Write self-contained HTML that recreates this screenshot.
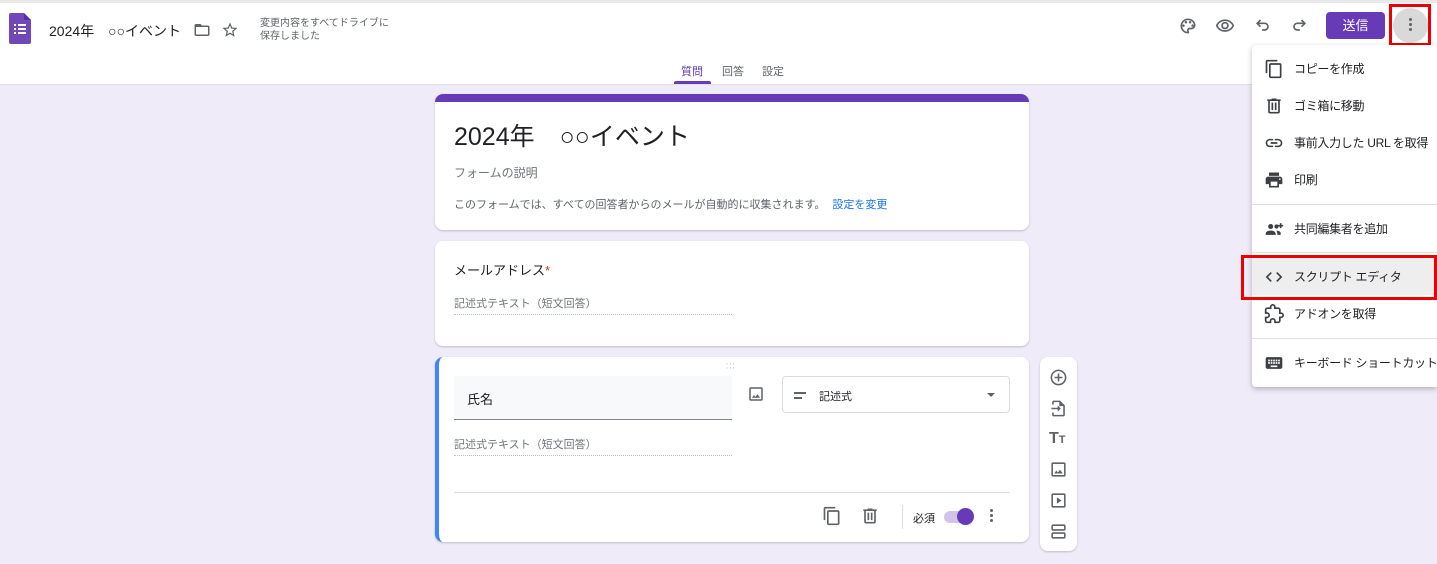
<!DOCTYPE html>
<html><head><meta charset="utf-8"><style>
*{box-sizing:border-box;margin:0;padding:0}
body{width:1437px;height:564px;overflow:hidden;background:#f0ebf8;font-family:"Liberation Sans","Noto Sans CJK JP",sans-serif;color:#202124;position:relative}
.a{position:absolute}
.hdr{left:0;top:0;width:1437px;height:85px;background:#fff;border-top:3px solid #e8e8e8;border-bottom:1px solid #e0e0e0}
.card{position:absolute;background:#fff;border-radius:8px;box-shadow:0 1px 2px rgba(0,0,0,.2)}
.ic{position:absolute;fill:#5f6368}
.mi{position:absolute;left:0;width:185px;height:37px;font-size:12px;color:#202124;white-space:nowrap}
.mi span{position:absolute;left:42px;top:10px;letter-spacing:-.3px}
.mi svg{position:absolute;left:12px;top:9px;fill:#3c4043}
</style></head><body>
<div class="a hdr"></div>
<svg class="a" style="left:9px;top:13px" width="22" height="31" viewBox="0 0 22 31"><path d="M2 0h13l7 7v22a2 2 0 0 1-2 2H2a2 2 0 0 1-2-2V2a2 2 0 0 1 2-2z" fill="#7248b9"/><path d="M15 0l7 7h-7z" fill="#5a2f9e"/><g fill="#fff"><rect x="5" y="11" width="2" height="2"/><rect x="9" y="11" width="8" height="2"/><rect x="5" y="15" width="2" height="2"/><rect x="9" y="15" width="8" height="2"/><rect x="5" y="19" width="2" height="2"/><rect x="9" y="19" width="8" height="2"/></g></svg>
<div class="a" style="left:49px;top:21px;font-size:14px;white-space:nowrap">2024年　○○イベント</div>
<svg class="ic" style="left:193px;top:21px" width="18" height="18" viewBox="0 0 24 24"><path d="M10 4H4c-1.1 0-2 .9-2 2v12c0 1.1.9 2 2 2h16c1.1 0 2-.9 2-2V8c0-1.1-.9-2-2-2h-8l-2-2zm10 14H4V8h16v10z"/></svg>
<svg class="ic" style="left:221px;top:21px" width="18" height="18" viewBox="0 0 24 24"><path d="M22 9.24l-7.19-.62L12 2 9.19 8.63 2 9.24l5.46 4.73L5.82 21 12 17.27 18.18 21l-1.63-7.03L22 9.24zM12 15.4l-3.76 2.27 1-4.28-3.32-2.88 4.38-.38L12 6.1l1.71 4.04 4.38.38-3.32 2.88 1 4.28L12 15.4z"/></svg>
<div class="a" style="left:260px;top:17px;font-size:10px;line-height:13px;color:#5f6368">変更内容をすべてドライブに<br>保存しました</div>
<svg class="ic" style="left:1178px;top:16px" width="20" height="20" viewBox="0 0 24 24"><path d="M12 3a9 9 0 0 0 0 18c.83 0 1.5-.67 1.5-1.5 0-.39-.15-.74-.39-1.01-.23-.26-.38-.61-.38-.99 0-.83.67-1.5 1.5-1.5H16c2.76 0 5-2.24 5-5 0-4.42-4.03-8-9-8zm0 16a7 7 0 0 1 0-14c3.86 0 7 2.69 7 6 0 1.65-1.35 3-3 3h-1.77c-1.93 0-3.5 1.57-3.5 3.5 0 .61.16 1.2.46 1.71A.5.5 0 0 1 12 19z"/><circle cx="6.5" cy="11.5" r="1.5"/><circle cx="9.5" cy="7.5" r="1.5"/><circle cx="14.5" cy="7.5" r="1.5"/><circle cx="17.5" cy="11.5" r="1.5"/></svg>
<svg class="ic" style="left:1215px;top:16px" width="20" height="20" viewBox="0 0 24 24"><path d="M12 6c3.79 0 7.17 2.13 8.82 5.5C19.17 14.87 15.79 17 12 17s-7.17-2.13-8.82-5.5C4.83 8.13 8.21 6 12 6m0-2C7 4 2.73 7.11 1 11.5 2.73 15.89 7 19 12 19s9.27-3.11 11-7.5C21.27 7.11 17 4 12 4zm0 5a2.5 2.5 0 1 1 0 5 2.5 2.5 0 0 1 0-5m0-2c-2.48 0-4.5 2.02-4.5 4.5S9.52 16 12 16s4.5-2.02 4.5-4.5S14.48 7 12 7z"/></svg>
<svg class="a" style="left:1253px;top:15px;fill:none" width="20" height="20" viewBox="0 0 24 24" stroke="#5f6368" stroke-width="2"><path d="M9 6 5 10l4 4"/><path d="M5 10h9a4 4 0 0 1 0 8h-3"/></svg>
<svg class="a" style="left:1289px;top:15px;fill:none" width="20" height="20" viewBox="0 0 24 24" stroke="#5f6368" stroke-width="2"><path d="M15 6l4 4-4 4"/><path d="M19 10h-9a4 4 0 0 0 0 8h3"/></svg>
<div class="a" style="left:1326px;top:12px;width:59px;height:27px;background:#673ab7;border-radius:4px;color:#fff;font-size:13px;text-align:center;line-height:27px">送信</div>
<div class="a" style="left:1393px;top:8px;width:35px;height:35px;border-radius:50%;background:#d9d9d9"></div>
<div class="a" style="left:1409px;top:18px;width:3px;height:3px;border-radius:50%;background:#5f6368;box-shadow:0 5px 0 #5f6368,0 10px 0 #5f6368"></div>
<div class="a" style="left:1389px;top:4px;width:42px;height:42px;border:3px solid #e00"></div>
<div class="a" style="left:681px;top:63px;font-size:11px;color:#673ab7">質問</div>
<div class="a" style="left:674px;top:81px;width:37px;height:3px;background:#673ab7;border-radius:2px 2px 0 0"></div>
<div class="a" style="left:722px;top:63px;font-size:11px;color:#5f6368">回答</div>
<div class="a" style="left:762px;top:63px;font-size:11px;color:#5f6368">設定</div>
<div class="card" style="left:435px;top:94px;width:594px;height:136px;overflow:hidden"><div style="height:8px;background:#673ab7"></div></div>
<div class="a" style="left:454px;top:117px;font-size:25px">2024年　○○イベント</div>
<div class="a" style="left:454px;top:164px;font-size:12px;color:#70757a">フォームの説明</div>
<div class="a" style="left:454px;top:196px;font-size:11px;color:#5f6368">このフォームでは、すべての回答者からのメールが自動的に収集されます。 <span style="color:#1a73e8;margin-left:4px">設定を変更</span></div>
<div class="card" style="left:435px;top:241px;width:594px;height:105px"></div>
<div class="a" style="left:454px;top:260px;font-size:13px">メールアドレス<span style="color:#d93025">*</span></div>
<div class="a" style="left:454px;top:295px;font-size:11px;color:#70757a">記述式テキスト（短文回答）</div>
<div class="a" style="left:454px;top:314px;width:278px;border-top:1px dotted #bdbdbd"></div>
<div class="card" style="left:435px;top:357px;width:594px;height:185px;border-left:4px solid #4285f4"></div>
<div class="a" style="left:726px;top:362px;font-size:8px;color:#999;letter-spacing:1px;line-height:4px">∙∙∙<br>∙∙∙</div>
<div class="a" style="left:454px;top:376px;width:278px;height:44px;background:#f8f9fa;border-bottom:1px solid #80868b"></div>
<div class="a" style="left:467px;top:389px;font-size:13px">氏名</div>
<svg class="ic" style="left:747px;top:385px" width="18" height="18" viewBox="0 0 24 24"><path d="M19 3H5a2 2 0 0 0-2 2v14a2 2 0 0 0 2 2h14a2 2 0 0 0 2-2V5a2 2 0 0 0-2-2zm0 16H5V5h14v14zm-5.04-6.71-2.75 3.54-1.96-2.36L6.5 17h11l-3.54-4.71z"/></svg>
<div class="a" style="left:782px;top:376px;width:228px;height:37px;border:1px solid #dadce0;border-radius:4px"></div>
<div class="a" style="left:794px;top:392px;width:12px;height:2px;background:#5f6368"></div>
<div class="a" style="left:794px;top:397px;width:8px;height:2px;background:#5f6368"></div>
<div class="a" style="left:819px;top:388px;font-size:11px">記述式</div>
<div class="a" style="left:987px;top:393px;border:4px solid transparent;border-top:4px solid #5f6368;border-bottom:0"></div>
<div class="a" style="left:454px;top:436px;font-size:11px;color:#70757a">記述式テキスト（短文回答）</div>
<div class="a" style="left:454px;top:455px;width:278px;border-top:1px dotted #bdbdbd"></div>
<div class="a" style="left:454px;top:492px;width:556px;border-top:1px solid #e0e0e0"></div>
<svg class="ic" style="left:822px;top:506px" width="20" height="20" viewBox="0 0 24 24"><path d="M16 1H4c-1.1 0-2 .9-2 2v14h2V3h12V1zm3 4H8c-1.1 0-2 .9-2 2v14c0 1.1.9 2 2 2h11c1.1 0 2-.9 2-2V7c0-1.1-.9-2-2-2zm0 16H8V7h11v14z"/></svg>
<svg class="ic" style="left:860px;top:506px" width="20" height="20" viewBox="0 0 24 24"><path d="M15 4V3H9v1H4v2h1v13c0 1.1.9 2 2 2h10c1.1 0 2-.9 2-2V6h1V4h-5zm2 15H7V6h10v13zM9 8h2v9H9zm4 0h2v9h-2z"/></svg>
<div class="a" style="left:902px;top:505px;width:1px;height:24px;background:#dadce0"></div>
<div class="a" style="left:913px;top:510px;font-size:11px">必須</div>
<div class="a" style="left:944px;top:511px;width:28px;height:12px;border-radius:6px;background:#d1c4e9"></div>
<div class="a" style="left:957px;top:508px;width:17px;height:17px;border-radius:50%;background:#673ab7"></div>
<div class="a" style="left:990px;top:509px;width:3px;height:3px;border-radius:50%;background:#5f6368;box-shadow:0 5px 0 #5f6368,0 10px 0 #5f6368"></div>
<div class="card" style="left:1040px;top:357px;width:37px;height:194px"></div>
<svg class="ic" style="left:1049px;top:368px" width="19" height="19" viewBox="0 0 24 24"><path d="M13 7h-2v4H7v2h4v4h2v-4h4v-2h-4V7zm-1-5C6.48 2 2 6.48 2 12s4.48 10 10 10 10-4.48 10-10S17.52 2 12 2zm0 18c-4.41 0-8-3.59-8-8s3.59-8 8-8 8 3.59 8 8-3.59 8-8 8z"/></svg>
<svg class="ic" style="left:1049px;top:399px" width="19" height="19" viewBox="0 0 24 24"><path d="M14 2H6c-1.1 0-2 .9-2 2v3h2V4h7v5h5v11H6v-3H4v3c0 1.1.9 2 2 2h12c1.1 0 2-.9 2-2V8l-6-6zM11 16l4-4-4-4v3H3v2h8v3z"/></svg>
<div class="a" style="left:1049px;top:430px;font-size:16px;font-weight:bold;color:#5f6368">T<span style="font-size:11px">T</span></div>
<svg class="ic" style="left:1049px;top:460px" width="19" height="19" viewBox="0 0 24 24"><path d="M19 3H5a2 2 0 0 0-2 2v14a2 2 0 0 0 2 2h14a2 2 0 0 0 2-2V5a2 2 0 0 0-2-2zm0 16H5V5h14v14zm-5.04-6.71-2.75 3.54-1.96-2.36L6.5 17h11l-3.54-4.71z"/></svg>
<svg class="ic" style="left:1049px;top:491px" width="19" height="19" viewBox="0 0 24 24"><path d="M10 8v8l6-4-6-4zm9-5H5a2 2 0 0 0-2 2v14a2 2 0 0 0 2 2h14a2 2 0 0 0 2-2V5a2 2 0 0 0-2-2zm0 16H5V5h14v14z"/></svg>
<svg class="ic" style="left:1049px;top:522px" width="19" height="19" viewBox="0 0 24 24"><path d="M19 13H5c-1.1 0-2 .9-2 2v4c0 1.1.9 2 2 2h14c1.1 0 2-.9 2-2v-4c0-1.1-.9-2-2-2zm0 6H5v-4h14v4zm0-16H5c-1.1 0-2 .9-2 2v4c0 1.1.9 2 2 2h14c1.1 0 2-.9 2-2V5c0-1.1-.9-2-2-2zm0 6H5V5h14v4z"/></svg>
<div class="a" style="left:1252px;top:45px;width:185px;height:342px;background:#fff;box-shadow:0 2px 6px rgba(0,0,0,.25);border-radius:4px 0 0 4px">
 <div class="mi" style="top:5px"><svg width="20" height="20" viewBox="0 0 24 24"><path d="M16 1H4c-1.1 0-2 .9-2 2v14h2V3h12V1zm3 4H8c-1.1 0-2 .9-2 2v14c0 1.1.9 2 2 2h11c1.1 0 2-.9 2-2V7c0-1.1-.9-2-2-2zm0 16H8V7h11v14z"/></svg><span>コピーを作成</span></div>
 <div class="mi" style="top:42px"><svg width="20" height="20" viewBox="0 0 24 24"><path d="M15 4V3H9v1H4v2h1v13c0 1.1.9 2 2 2h10c1.1 0 2-.9 2-2V6h1V4h-5zm2 15H7V6h10v13zM9 8h2v9H9zm4 0h2v9h-2z"/></svg><span>ゴミ箱に移動</span></div>
 <div class="mi" style="top:79px"><svg width="20" height="20" viewBox="0 0 24 24"><path d="M3.9 12c0-1.71 1.39-3.1 3.1-3.1h4V7H7c-2.76 0-5 2.24-5 5s2.24 5 5 5h4v-1.9H7c-1.71 0-3.1-1.39-3.1-3.1zM8 13h8v-2H8v2zm9-6h-4v1.9h4c1.71 0 3.1 1.39 3.1 3.1s-1.39 3.1-3.1 3.1h-4V17h4c2.76 0 5-2.24 5-5s-2.24-5-5-5z"/></svg><span>事前入力した URL を取得</span></div>
 <div class="mi" style="top:116px"><svg width="20" height="20" viewBox="0 0 24 24"><path d="M19 8H5c-1.66 0-3 1.34-3 3v6h4v4h12v-4h4v-6c0-1.66-1.34-3-3-3zm-3 11H8v-5h8v5zm3-7c-.55 0-1-.45-1-1s.45-1 1-1 1 .45 1 1-.45 1-1 1zm-1-9H6v4h12V3z"/></svg><span>印刷</span></div>
 <div style="position:absolute;left:0;top:159px;width:185px;border-top:1px solid #e0e0e0"></div>
 <div class="mi" style="top:165px"><svg width="20" height="20" viewBox="0 0 24 24"><circle cx="8" cy="9" r="3"/><circle cx="15" cy="9" r="2.5"/><path d="M2 18c0-3 3-4 6-4s6 1 6 4v1H2zM15 14c2 0 5 1 5 3v2h-4v-1c0-1.5-.5-2.5-1-4zM19 5h2v2h2v2h-2v2h-2V9h-2V7h2z"/></svg><span>共同編集者を追加</span></div>
 <div style="position:absolute;left:0;top:207px;width:185px;border-top:1px solid #e0e0e0"></div>
 <div class="mi" style="top:213px;background:#eee"><svg width="20" height="20" viewBox="0 0 24 24"><path d="M9.4 16.6 4.8 12l4.6-4.6L8 6l-6 6 6 6 1.4-1.4zm5.2 0 4.6-4.6-4.6-4.6L16 6l6 6-6 6-1.4-1.4z"/></svg><span>スクリプト エディタ</span></div>
 <div class="mi" style="top:250px"><svg width="20" height="20" viewBox="0 0 24 24" style="fill:none"><path d="M20.5 11H19V7c0-1.1-.9-2-2-2h-4V3.5a2.5 2.5 0 0 0-5 0V5H4c-1.1 0-2 .9-2 2v3.8h1.5c1.5 0 2.7 1.2 2.7 2.7S5 16.2 3.5 16.2H2V20c0 1.1.9 2 2 2h3.8v-1.5c0-1.5 1.2-2.7 2.7-2.7s2.7 1.2 2.7 2.7V22H17c1.1 0 2-.9 2-2v-4h1.5a2.5 2.5 0 0 0 0-5z" stroke="#3c4043" stroke-width="2"/></svg><span>アドオンを取得</span></div>
 <div style="position:absolute;left:0;top:293px;width:185px;border-top:1px solid #e0e0e0"></div>
 <div class="mi" style="top:299px"><svg width="20" height="20" viewBox="0 0 24 24"><path d="M20 5H4c-1.1 0-2 .9-2 2v10c0 1.1.9 2 2 2h16c1.1 0 2-.9 2-2V7c0-1.1-.9-2-2-2zm-9 3h2v2h-2V8zm0 3h2v2h-2v-2zM8 8h2v2H8V8zm0 3h2v2H8v-2zm-1 2H5v-2h2v2zm0-3H5V8h2v2zm9 7H8v-2h8v2zm0-4h-2v-2h2v2zm0-3h-2V8h2v2zm3 3h-2v-2h2v2zm0-3h-2V8h2v2z"/></svg><span>キーボード ショートカット</span></div>
</div>
<div class="a" style="left:1241px;top:255px;width:196px;height:45px;border:3px solid #e00"></div>
</body></html>
